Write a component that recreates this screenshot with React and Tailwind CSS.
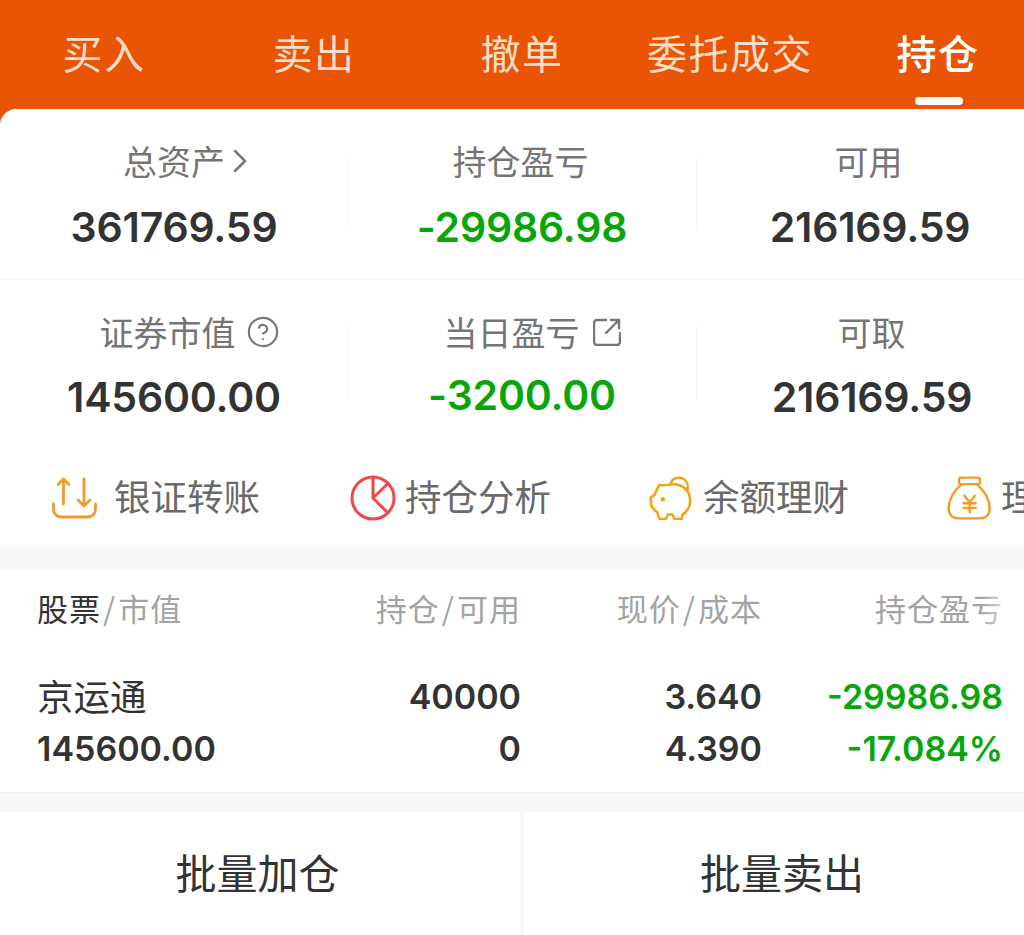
import { ChevronRight, CircleHelp } from 'lucide-react'

const tabs = ['买入', '卖出', '撤单', '委托成交', '持仓']

function TransferIcon() {
  return (
    <svg width="45" height="42" viewBox="52 476 45 42" fill="none" stroke="#f19b2c" strokeWidth="2.8" strokeLinecap="round" strokeLinejoin="round" className="shrink-0">
      <path d="M63.5 503V478M58 483.5l5.5-5.5 5.5 5.5" />
      <path d="M84 478v26M78 499l6 6 6-6" />
      <path d="M53.5 503v5.5a7.5 7.5 0 0 0 7.5 7.5h27a7.5 7.5 0 0 0 7.5-7.5V503" />
    </svg>
  )
}

function PieIcon() {
  return (
    <svg width="46" height="46" viewBox="349 474 46 46" fill="none" stroke="#f2474a" strokeWidth="3" strokeLinecap="round" strokeLinejoin="round" className="shrink-0">
      <circle cx="372" cy="497" r="21" />
      <path d="M372 476v21l14.5 14.5M372 497l15-14.5" />
    </svg>
  )
}

function PigIcon() {
  return (
    <svg width="46" height="47" viewBox="80 72 140 142" fill="none" stroke="#f5a10e" strokeWidth="7.5" strokeLinecap="round" strokeLinejoin="round" className="shrink-0">
      <path d="M150 100C165 98 180 102 192 112C208 125 212 150 205 168C200 180 192 188 185 192L183 205H160L155 192H140L135 205H115L108 185C100 180 95 172 90 165L88 140L100 132C103 122 108 112 114 102C125 102 135 104 150 100Z" />
      <path d="M150 96C152 82 170 76 185 82C198 88 204 102 200 118" />
      <circle cx="125" cy="145" r="3" fill="#f08a00" />
    </svg>
  )
}

function BagIcon() {
  return (
    <svg width="46" height="46" viewBox="972 72 140 140" fill="none" stroke="#f7981f" strokeWidth="7" strokeLinecap="round" strokeLinejoin="round" className="shrink-0">
      <rect x="1012" y="80" width="63" height="20" rx="6" />
      <path d="M1020 100C990 125 980 150 980 175C980 195 995 204 1010 204H1075C1092 204 1105 195 1105 175C1105 150 1095 125 1065 100" />
      <path d="M1028 135L1044 155L1060 135M1025 158H1063M1025 172H1063M1044 155V186" />
    </svg>
  )
}

function ExternalIcon() {
  return (
    <svg width="28" height="28" viewBox="0 0 28 28" fill="none" stroke="#777" strokeWidth="2.4" strokeLinecap="round" strokeLinejoin="round">
      <path d="M13 2H4a3 3 0 0 0-3 3v19a3 3 0 0 0 3 3h20a3 3 0 0 0 3-3V15" />
      <path d="M13 15L26 2M18 2h8v8" />
    </svg>
  )
}

function Stat({ label, value, green, labelClass = '', valueClass = 'mt-[21px]', children }) {
  return (
    <div className="relative flex flex-col items-center w-[348px] shrink-0">
      <div className={`relative text-[34px] leading-[44px] text-[#757575] ${labelClass}`}>
        {label}
        {children}
      </div>
      <div className={`font-['Inter'] text-[41px] leading-[46px] font-semibold tracking-[-0.2px] ${green ? 'text-[#08a608]' : 'text-[#333]'} ${valueClass}`}>
        {value}
      </div>
    </div>
  )
}

export default function App() {
  return (
    <div className="w-[1024px] h-[935px] overflow-hidden bg-white font-['Noto_Sans_CJK_SC','Liberation_Sans',sans-serif]">

      {/* top tabs */}
      <div className="h-[124px] bg-[#e95504]">
        <div className="flex h-[109px]">
          {tabs.map((t, i) => (
            <div key={t} className={`relative w-[208px] shrink-0 flex justify-center pt-[22px] ${i > 0 ? 'pl-[4px]' : ''}`}>
              <span className={`text-[40px] leading-[60px] tracking-[1.5px] whitespace-nowrap ${i === 4 ? 'text-white font-medium' : 'text-[#fbdcc9]'}`}>{t}</span>
              {i === 4 && <span className="absolute bottom-[4px] left-[83px] w-[48px] h-[8px] rounded-full bg-white" />}
            </div>
          ))}
        </div>
      </div>

      {/* account summary */}
      <div className="-mt-[15px] bg-white rounded-tl-[16px] overflow-hidden relative">
        <div className="relative flex h-[171px] pt-[30px] border-b border-[#f0f0f0]">
          <Stat label="总资产" value="361769.59">
            <ChevronRight className="absolute left-[97px] top-[2px] text-[#777]" size={40} strokeWidth={1.5} />
          </Stat>
          <Stat label="持仓盈亏" value="-29986.98" green labelClass="-ml-[3px]" />
          <Stat label="可用" value="216169.59" labelClass="-ml-[3px]" />
          <div className="absolute left-[348px] top-[49px] h-[72px] w-px bg-[#f1f1f1]" />
          <div className="absolute left-[696px] top-[49px] h-[72px] w-px bg-[#f1f1f1]" />
        </div>

        <div className="relative flex h-[170px] pt-[30px]">
          <Stat label="证券市值" value="145600.00" labelClass="-ml-[13px]" valueClass="mt-[20px]">
            <CircleHelp className="absolute left-[146px] top-[5px] text-[#777]" size={34} strokeWidth={1.5} />
          </Stat>
          <Stat label="当日盈亏" value="-3200.00" green labelClass="-ml-[21px]" valueClass="mt-[18px]">
            <div className="absolute left-[149px] top-[8px]"><ExternalIcon /></div>
          </Stat>
          <Stat label="可取" value="216169.59" labelClass="ml-[3px]" valueClass="mt-[20px] ml-[4px]" />
          <div className="absolute left-[348px] top-[47px] h-[72px] w-px bg-[#f1f1f1]" />
          <div className="absolute left-[696px] top-[47px] h-[72px] w-px bg-[#f1f1f1]" />
        </div>

        {/* shortcuts */}
        <div className="flex items-center h-[96px] pl-[52px] text-[36.5px] text-[#6a6a6a] whitespace-nowrap">
          <div className="flex items-center gap-[17px] w-[298px] shrink-0"><TransferIcon /><span className="-mt-[4px]">银证转账</span></div>
          <div className="flex items-center gap-[9px] w-[298px] shrink-0"><PieIcon /><span className="-mt-[4px]">持仓分析</span></div>
          <div className="flex items-center gap-[9px] w-[298px] shrink-0"><PigIcon /><span className="-mt-[4px]">余额理财</span></div>
          <div className="flex items-center gap-[9px] shrink-0"><BagIcon /><span className="-mt-[4px]">理财产品</span></div>
        </div>
      </div>

      <div className="h-[24px] bg-[#f6f7f9]" />

      {/* positions table */}
      <div className="relative h-[223px] border-b border-[#f0f0f0] pl-[37px]">
        <div className="grid grid-cols-[300px_184px_241px_241px] h-[76px] items-center text-[31px] text-[#a3a3a3] tracking-[1px]">
          <div><span className="text-[#333]">股票</span><span className="mx-[2px]">/</span>市值</div>
          <div className="text-right">持仓<span className="mx-[2px]">/</span>可用</div>
          <div className="text-right">现价<span className="mx-[2px]">/</span>成本</div>
          <div className="text-right">持仓盈亏</div>
        </div>
        <div className="absolute right-0 top-[16px] w-[44px] h-[48px] bg-gradient-to-r from-transparent to-white" />
        <div className="grid grid-cols-[300px_184px_241px_241px] mt-[25px] items-center leading-[52px] text-[#333] text-[34px] font-['Inter'] font-semibold">
          <div className="font-['Noto_Sans_CJK_SC'] font-normal text-[36.5px] -mt-[3px]">京运通</div>
          <div className="text-right">40000</div>
          <div className="text-right">3.640</div>
          <div className="text-right text-[#08a608] whitespace-nowrap">-29986.98</div>
          <div>145600.00</div>
          <div className="text-right">0</div>
          <div className="text-right">4.390</div>
          <div className="text-right text-[#08a608] whitespace-nowrap">-17.084%</div>
        </div>
      </div>

      <div className="h-[19px] bg-[#f6f7f9]" />

      {/* batch actions */}
      <div className="flex h-[123px] text-[41px] text-[#333] pb-[4px]">
        <div className="w-[524px] shrink-0 flex items-center justify-center pr-[9px] relative">
          批量加仓
          <span className="absolute right-0 top-0 h-[123px] w-[4px] bg-[#f6f7f9]" />
        </div>
        <div className="w-[516px] shrink-0 flex items-center justify-center">批量卖出</div>
      </div>
    </div>
  )
}
